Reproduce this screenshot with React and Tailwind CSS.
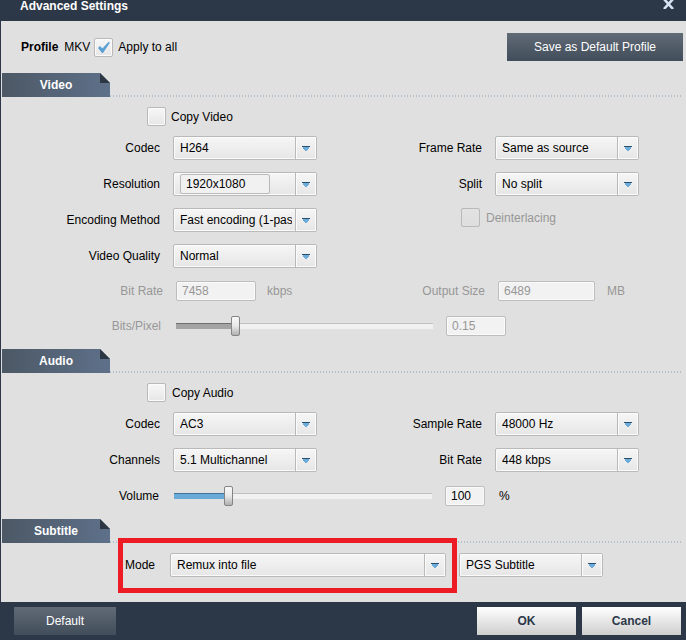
import { useState } from 'react'

function Arrow() {
  return (
    <svg className="w-[8px] h-[6px]" viewBox="0 0 8 6" shapeRendering="crispEdges">
      <path d="M1 2h6v2H6v1H5v1H3V5H2V4H1z" fill="#6fabd9" />
      <path d="M0 1h8v1H0z" fill="#24506f" />
    </svg>
  )
}

function Select({ id, label, options, className = '' }) {
  return (
    <div className={`relative h-6 ${className}`}>
      <select
        id={id}
        aria-label={label}
        className="appearance-none block w-full h-6 pl-[6px] pr-6 rounded-[2px] border border-[#b9b9b9] bg-linear-to-b from-[#f6f6f6] to-[#e6e6e6] shadow-[inset_0_0_0_1px_#fbfbfb] text-black"
      >
        {options.map((o) => <option key={o}>{o}</option>)}
      </select>
      <span className="absolute right-px inset-y-px w-[21px] flex items-center justify-center border-l border-[#b9b9b9] shadow-[inset_0_0_0_1px_#fbfbfb] pointer-events-none">
        <Arrow />
      </span>
    </div>
  )
}

function ComboBox({ id, value }) {
  return (
    <div className="flex items-center h-6 pl-[6px] rounded-[2px] border border-[#b9b9b9] bg-linear-to-b from-[#f6f6f6] to-[#e6e6e6] shadow-[inset_0_0_0_1px_#fbfbfb]">
      <input
        id={id}
        defaultValue={value}
        className="w-[90px] h-5 px-[5px] rounded-[2px] border border-[#b9b9b9] bg-[#f1f1f1] text-black"
      />
      <button type="button" aria-label="Choose resolution" className="ml-auto w-[21px] h-[22px] flex items-center justify-center border-l border-[#b9b9b9] shadow-[inset_0_0_0_1px_#fbfbfb]">
        <Arrow />
      </button>
    </div>
  )
}

function TextBox({ className = '', ...props }) {
  return (
    <input
      {...props}
      className={`h-5 px-[5px] rounded-[2px] border border-[#bdbdbd] bg-[#f2f2f2] shadow-[inset_0_0_0_1px_#fafafa] text-black disabled:text-[#979797] ${className}`}
    />
  )
}

function Check({ label, gap = 'gap-[5px]', className = '', ...props }) {
  return (
    <label className={`flex items-center ${gap} ${className}`}>
      <span className="relative w-[19px] h-[19px] shrink-0">
        <input
          type="checkbox"
          {...props}
          className="peer appearance-none block w-[19px] h-[19px] rounded-[2px] border border-[#b9b9b9] bg-linear-to-b from-[#f7f7f7] to-[#e6e6e6] shadow-[inset_0_0_0_1px_#fbfbfb] disabled:from-[#e2e2e2] disabled:to-[#dedede] disabled:shadow-none"
        />
        <svg className="absolute top-[4px] left-[4px] w-[12px] h-[11px] hidden peer-checked:block pointer-events-none" viewBox="0 0 12 11">
          <path d="M0 6l2-2 2.4 2.6L10.4 0 12 .6 5 11H4z" fill="#5ba0d2" />
        </svg>
      </span>
      {label}
    </label>
  )
}

function Slider({ start, tone, className = '', ...props }) {
  const [value, setValue] = useState(start)
  return (
    <input
      type="range"
      value={value}
      onChange={(e) => setValue(Number(e.target.value))}
      {...props}
      style={{ backgroundSize: `${value}% 6px, 100% 6px` }}
      className={`appearance-none h-5 bg-no-repeat bg-left ${tone} [&::-webkit-slider-thumb]:appearance-none [&::-webkit-slider-thumb]:w-[9px] [&::-webkit-slider-thumb]:h-5 [&::-webkit-slider-thumb]:rounded-[2px] [&::-webkit-slider-thumb]:border [&::-webkit-slider-thumb]:border-[#858585] [&::-webkit-slider-thumb]:bg-[linear-gradient(#f8f8f8,#e8e8e8_50%,#b0b0b0)] ${className}`}
    />
  )
}

function SectionTab({ children }) {
  return (
    <div className="flex items-end pl-px pr-[5px]">
      <h2 className="relative w-[108px] h-6 flex items-center justify-center bg-linear-to-r from-[#4c5865] to-[#5e718a] text-white font-bold">
        {children}
        <svg className="absolute top-0 right-0 w-[10px] h-[10px]" viewBox="0 0 10 10">
          <path d="M0 0h10v10z" fill="#e0e0e0" />
          <path d="M0 0l10 10H0z" fill="#2d3744" />
        </svg>
      </h2>
      <div className="flex-1 h-[2px] bg-[repeating-linear-gradient(90deg,#b4bfcd_0px,#b4bfcd_1px,transparent_1px,transparent_3px)]" />
    </div>
  )
}

function Label({ className = '', ...props }) {
  return <label {...props} className={`text-right whitespace-nowrap ${className}`} />
}

const GRID = 'grid grid-cols-[159px_144px_1fr_144px] gap-x-[13px] gap-y-3 items-center pr-[47px]'
const GREY_TRACK = 'bg-[linear-gradient(#6f6f6f_1px,#a3a3a3_1px),linear-gradient(#c0c0c0_1px,#f1f1f1_1px)]'
const BLUE_TRACK = 'bg-[linear-gradient(#42749b_1px,#69aad8_1px),linear-gradient(#c0c0c0_1px,#f1f1f1_1px)]'

export default function App() {
  return (
    <div className="min-h-screen flex flex-col bg-[#2c3848] font-['Liberation_Sans',Arial,sans-serif] text-[12px] leading-4 text-black">
      <header className="h-[21px] flex justify-between items-start pl-5 pr-3 text-white">
        <h1 className="text-[12px] leading-3 font-bold">Advanced Settings</h1>
        <button type="button" aria-label="Close" className="text-[#d7e3f2]">
          <svg className="w-[11px] h-[9px]" viewBox="0 0 11 9" stroke="currentColor" strokeWidth="2.6">
            <path d="M1 -1l9 10M10 -1L1 9" />
          </svg>
        </button>
      </header>

      <main className="flex-1 ml-px bg-[#e0e0e0]">
        <div className="flex items-center pt-3 pl-5 pr-[3px] mb-3">
          <span className="font-bold">Profile</span>
          <span className="ml-[6px] mr-1">MKV</span>
          <Check label="Apply to all" defaultChecked />
          <button type="button" className="ml-auto w-44 h-7 bg-linear-to-b from-[#616b76] to-[#424d5b] text-white">
            Save as Default Profile
          </button>
        </div>

        <section>
          <SectionTab>Video</SectionTab>
          <Check label="Copy Video" className="w-fit ml-[146px] my-[10px]" />
          <div className={GRID}>
            <Label htmlFor="vcodec">Codec</Label>
            <Select id="vcodec" options={['H264', 'H265', 'MPEG4']} />
            <Label htmlFor="fps">Frame Rate</Label>
            <Select id="fps" options={['Same as source', '24', '30', '60']} />

            <Label htmlFor="res">Resolution</Label>
            <ComboBox id="res" value="1920x1080" />
            <Label htmlFor="split">Split</Label>
            <Select id="split" options={['No split', 'By size', 'By time']} />

            <Label htmlFor="method">Encoding Method</Label>
            <Select id="method" options={['Fast encoding (1-pass)', 'High quality (2-pass)']} />
            <div className="col-span-2 justify-self-end self-start w-[178px]">
              <Check label="Deinterlacing" disabled gap="gap-[6px]" className="text-[#979797]" />
            </div>

            <Label htmlFor="quality">Video Quality</Label>
            <Select id="quality" options={['Normal', 'High', 'Low']} />
          </div>

          <div className="flex items-center mt-[13px] pr-[61px] text-[#979797]">
            <Label htmlFor="vbitrate" className="w-[162px]">Bit Rate</Label>
            <TextBox id="vbitrate" defaultValue="7458" disabled className="w-20 ml-[13px]" />
            <span className="ml-[11px]">kbps</span>
            <Label htmlFor="size" className="ml-auto">Output Size</Label>
            <TextBox id="size" defaultValue="6489" disabled className="w-[97px] ml-[13px]" />
            <span className="ml-3">MB</span>
          </div>
          <div className="flex items-center mt-[15px] mb-[13px] pr-[180px] text-[#979797]">
            <Label htmlFor="bpp" className="w-[160px]">Bits/Pixel</Label>
            <Slider id="bpp" start={22} tone={GREY_TRACK} disabled className="flex-1 min-w-0 ml-[15px] mr-[13px]" />
            <TextBox aria-label="Bits per pixel" defaultValue="0.15" disabled className="w-[60px]" />
          </div>
        </section>

        <section>
          <SectionTab>Audio</SectionTab>
          <Check label="Copy Audio" gap="gap-[6px]" className="w-fit ml-[146px] my-[10px]" />
          <div className={GRID}>
            <Label htmlFor="acodec">Codec</Label>
            <Select id="acodec" options={['AC3', 'AAC', 'MP3']} />
            <Label htmlFor="rate">Sample Rate</Label>
            <Select id="rate" options={['48000 Hz', '44100 Hz']} />
            <Label htmlFor="channels">Channels</Label>
            <Select id="channels" options={['5.1 Multichannel', 'Stereo']} />
            <Label htmlFor="abitrate">Bit Rate</Label>
            <Select id="abitrate" options={['448 kbps', '384 kbps']} />
          </div>
          <div className="flex items-center mt-[14px] mb-[13px] pr-[177px]">
            <Label htmlFor="volume" className="w-[158px]">Volume</Label>
            <Slider id="volume" start={20} tone={BLUE_TRACK} className="flex-1 min-w-0 ml-[15px] mr-[13px]" />
            <TextBox aria-label="Volume percent" defaultValue="100" className="w-10" />
            <span className="ml-[14px] w-[10px]">%</span>
          </div>
        </section>

        <section>
          <SectionTab>Subtitle</SectionTab>
          <div className="flex items-center gap-[13px] pt-[10px] pb-[25px] pl-[124px] pr-[83px]">
            <div className="relative flex-1 flex items-center">
              <Label htmlFor="mode" className="w-[30px] mr-[15px]">Mode</Label>
              <Select id="mode" options={['Remux into file', 'Render to video']} className="flex-1" />
              {/* highlight frame */}
              <div className="absolute -left-[7px] -right-[11px] -top-[15px] -bottom-4 border-[5px] border-[#ed1c24] pointer-events-none" />
            </div>
            <Select label="Subtitle type" options={['PGS Subtitle', 'SRT Subtitle']} className="w-36" />
          </div>
        </section>
      </main>

      <footer className="flex gap-[6px] py-[5px] pl-[14px] pr-[5px]">
        <button type="button" className="w-[102px] h-7 mr-auto bg-linear-to-b from-[#616b76] to-[#424d5b] text-white">Default</button>
        <button type="button" className="w-[99px] h-7 bg-linear-to-b from-white to-[#cfcfcf] text-[#2c3848] font-bold">OK</button>
        <button type="button" className="w-[99px] h-7 bg-linear-to-b from-white to-[#cfcfcf] text-[#2c3848] font-bold">Cancel</button>
      </footer>
    </div>
  )
}
